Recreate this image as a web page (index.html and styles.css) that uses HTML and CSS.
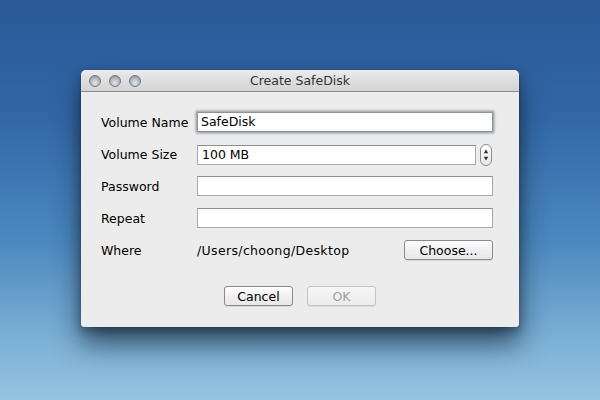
FILE: index.html
```html
<!DOCTYPE html>
<html>
<head>
<meta charset="utf-8">
<link rel="stylesheet" href="styles.css">
</head>
<body>
<div class="desktop">
  <div class="window">
    <div class="titlebar">
      <div class="lights">
        <span class="light"></span><span class="light"></span><span class="light"></span>
      </div>
      <div class="title">Create SafeDisk</div>
    </div>
    <div class="content">
      <div class="form">
        <label class="lbl">Volume Name</label>
        <div class="field focus">SafeDisk</div>

        <label class="lbl">Volume Size</label>
        <div class="sizerow">
          <div class="field size">100 MB</div>
          <div class="stepper">
            <svg width="11" height="22" viewBox="0 0 11 22"><path d="M5.5 5 L8 9 L3 9 Z" fill="#333"/><path d="M5.5 17 L8 13 L3 13 Z" fill="#333"/></svg>
          </div>
        </div>

        <label class="lbl">Password</label>
        <div class="field"></div>

        <label class="lbl">Repeat</label>
        <div class="field"></div>

        <label class="lbl">Where</label>
        <div class="whererow">
          <span class="path">/Users/choong/Desktop</span>
          <button class="btn choose">Choose...</button>
        </div>
      </div>
      <div class="actions">
        <button class="btn">Cancel</button>
        <button class="btn disabled">OK</button>
      </div>
    </div>
  </div>
</div>
</body>
</html>
```
FILE: styles.css
```css
* { box-sizing: border-box; }
html, body { margin: 0; padding: 0; }
body {
  font-family: "DejaVu Sans", "Liberation Sans", sans-serif;
  font-size: 12px;
  color: #000;
}
.desktop {
  width: 600px;
  height: 400px;
  overflow: hidden;
  background: linear-gradient(to bottom, #2a5896 0%, #3268a8 30%, #4a88bf 60%, #7cb0d6 85%, #96c4df 100%);
  padding-top: 70px;
}
.window {
  width: 438px;
  height: 257px;
  margin-left: 81px;
  background: #ececec;
  border-radius: 5px 5px 3px 3px;
  box-shadow: 0 16px 28px rgba(15, 30, 45, 0.7), 0 4px 10px rgba(15, 30, 45, 0.4), 0 0 1px rgba(0,0,0,0.6);
  overflow: hidden;
}
.titlebar {
  height: 22px;
  background: linear-gradient(to bottom, #ebebeb, #d3d3d3);
  border-bottom: 1px solid #8c8c8c;
  display: flex;
  align-items: center;
  padding-left: 8px;
}
.lights { display: flex; gap: 8px; width: 120px; }
.light {
  width: 12px;
  height: 12px;
  border-radius: 50%;
  background: radial-gradient(circle at 50% 70%, #e4e8ec 0%, #aeb5bd 55%, #7d858e 100%);
  border: 1px solid #737a82;
}
.title {
  flex: 1;
  text-align: center;
  margin-left: -128px;
  color: #333;
  font-size: 12.5px;
}
.content {
  padding: 20px 26px 0 20px;
}
.form {
  display: grid;
  grid-template-columns: 96px 1fr;
  grid-template-rows: 20px 20px 20px 20px 20px;
  row-gap: 12px;
  align-items: center;
}
.form > :nth-child(n+3) { position: relative; }
.lbl { font-size: 12.5px; }
.field {
  height: 20px;
  background: #fff;
  border: 1px solid #a9a9a9;
  border-top-color: #8e8e8e;
  padding: 0 3px;
  line-height: 18px;
  font-size: 12.5px;
}
.field.focus {
  border: 1px solid #8d949c;
  box-shadow: 0 0 0 1px #a7aeb6, 0 0 2px 2px #b6bcc3;
  border-radius: 1px;
}
.sizerow { display: flex; align-items: center; gap: 4px; margin-top: 2px; }
.field.size { flex: 1; padding-left: 4px; }
.stepper {
  width: 12px;
  height: 22px;
  border: 1px solid #8d8d8d;
  border-radius: 6px;
  background: linear-gradient(to bottom, #fff, #e6e6e6);
  display: flex;
  align-items: center;
  justify-content: center;
  margin-right: 1px;
}
.stepper svg { display: block; }
.whererow { display: flex; align-items: center; justify-content: space-between; }
.path { font-size: 12.5px; letter-spacing: 0.35px; }
.btn {
  font-family: inherit;
  font-size: 12.5px;
  height: 20px;
  padding: 0;
  background: linear-gradient(to bottom, #ffffff, #f0f0f0 50%, #e8e8e8);
  border: 1px solid #8a8a8a;
  border-radius: 3px;
  color: #000;
  box-shadow: 0 1px 0 rgba(0,0,0,0.08);
}
.btn.choose { width: 89px; }
.actions {
  display: flex;
  justify-content: center;
  gap: 14px;
  margin-top: 26px;
  margin-left: 6px;
}
.actions .btn { width: 69px; }
.btn.disabled {
  color: #a0a0a0;
  border-color: #c4c4c4;
  background: linear-gradient(to bottom, #f6f6f6, #ececec);
}
```
